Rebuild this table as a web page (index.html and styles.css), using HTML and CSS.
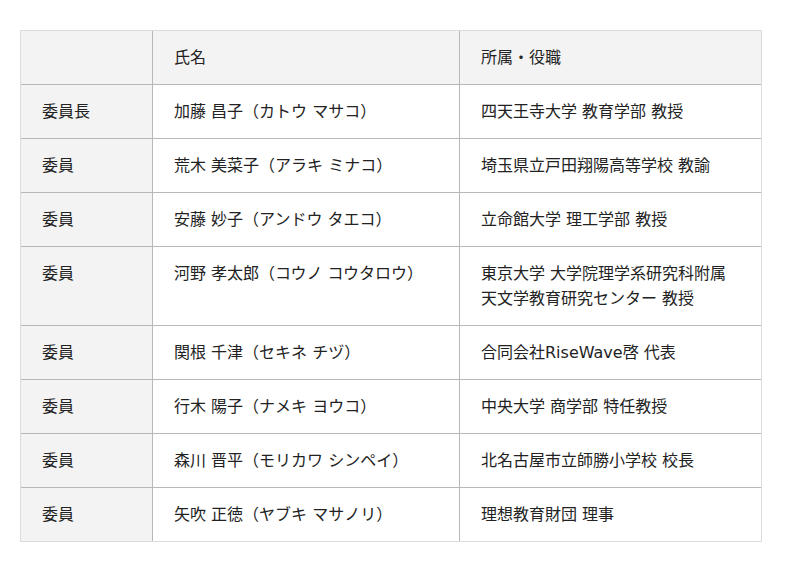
FILE: index.html
```html
<!DOCTYPE html>
<html lang="ja">
<head>
<meta charset="utf-8">
<link rel="stylesheet" href="styles.css">
</head>
<body>
<table class="members">
  <colgroup><col class="c1"><col class="c2"><col class="c3"></colgroup>
  <thead>
    <tr><th class="role"></th><th>氏名</th><th>所属・役職</th></tr>
  </thead>
  <tbody>
    <tr><td class="role">委員長</td><td>加藤 昌子（カトウ マサコ）</td><td>四天王寺大学 教育学部 教授</td></tr>
    <tr><td class="role">委員</td><td>荒木 美菜子（アラキ ミナコ）</td><td>埼玉県立戸田翔陽高等学校 教諭</td></tr>
    <tr><td class="role">委員</td><td>安藤 妙子（アンドウ タエコ）</td><td>立命館大学 理工学部 教授</td></tr>
    <tr><td class="role">委員</td><td>河野 孝太郎（コウノ コウタロウ）</td><td>東京大学 大学院理学系研究科附属<br>天文学教育研究センター 教授</td></tr>
    <tr><td class="role">委員</td><td>関根 千津（セキネ チヅ）</td><td>合同会社RiseWave啓 代表</td></tr>
    <tr><td class="role">委員</td><td>行木 陽子（ナメキ ヨウコ）</td><td>中央大学 商学部 特任教授</td></tr>
    <tr><td class="role">委員</td><td>森川 晋平（モリカワ シンペイ）</td><td>北名古屋市立師勝小学校 校長</td></tr>
    <tr><td class="role">委員</td><td>矢吹 正徳（ヤブキ マサノリ）</td><td>理想教育財団 理事</td></tr>
  </tbody>
</table>
</body>
</html>
```
FILE: styles.css
```css
html, body { background: #fff; }
body {
  margin: 30px 20px;
  font-family: "DejaVu Sans", "Noto Sans CJK JP", sans-serif;
  font-size: 16px;
  color: #222;
}
.members {
  width: 742px;
  border-collapse: separate;
  border-spacing: 0;
  table-layout: fixed;
  border: 1px solid #dcdcdc;
}
.c1 { width: 131px; }
.c2 { width: 307px; }
.c3 { width: 302px; }
.members th, .members td {
  text-align: left;
  font-weight: normal;
  vertical-align: top;
  padding: 14px 21px;
  line-height: 25px;
  border-left: 1px solid #b8b8b8;
  border-top: 1px solid #b8b8b8;
}
.members th:first-child, .members td:first-child { border-left: none; }
.members thead th { border-top: none; background: #f3f3f3; }
.members td.role { background: #f3f3f3; }
```
